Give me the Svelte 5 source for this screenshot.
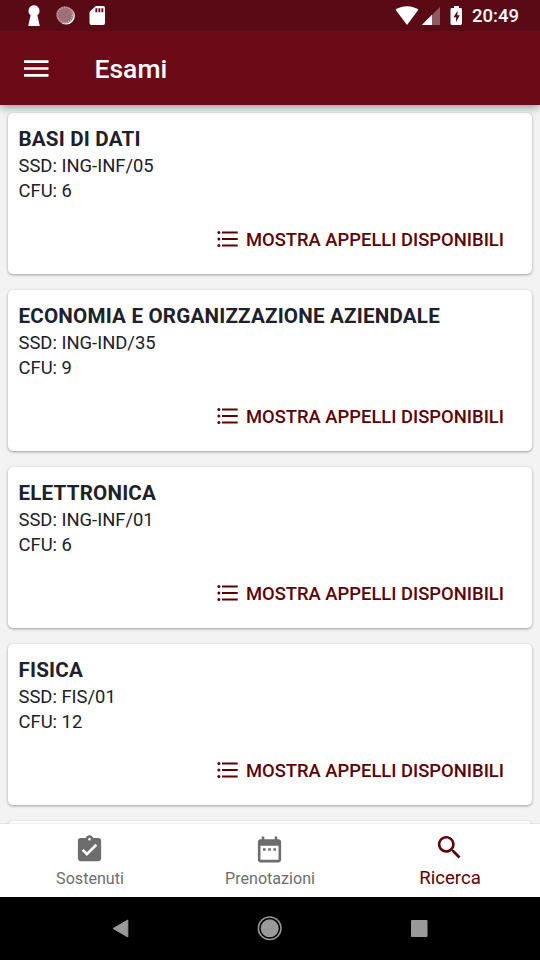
<script>
  const exams = [
    { name: 'BASI DI DATI', ssd: 'ING-INF/05', cfu: 6 },
    { name: 'ECONOMIA E ORGANIZZAZIONE AZIENDALE', ssd: 'ING-IND/35', cfu: 9 },
    { name: 'ELETTRONICA', ssd: 'ING-INF/01', cfu: 6 },
    { name: 'FISICA', ssd: 'FIS/01', cfu: 12 }
  ];
</script>

<div class="screen">
  <div class="status">
    <svg class="left" width="110" height="31" viewBox="0 0 110 31">
      <path fill="#fff" d="M34 5.2a5.7 5.7 0 0 0-3.400 10.100L28.200 26h11.600l-2.400-10.700A5.700 5.700 0 0 0 34 5.200z" />
      <circle cx="66.200" cy="15.900" r="8.600" fill="#fff" />
      <circle cx="65" cy="14.900" r="8.700" fill="#a06e78" />
      <circle cx="65" cy="14.900" r="7.600" fill="none" stroke="#c7a5ab" stroke-width="1.500" stroke-dasharray="1.200 1.250" />
      <path fill="#fff" fill-rule="evenodd" d="M95.700 6h7.300a2 2 0 0 1 2 2v15a2 2 0 0 1-2 2H91.500a2 2 0 0 1-2-2V12zM95.400 8.300v3.900h1.900V8.300zm3 0v3.900h1.900V8.300zm3 0v3.900h1.900V8.300z" />
    </svg>
    <svg width="90" height="31" viewBox="382 0 90 31">
      <path fill="#fff" d="M395.600 9.700q4.500-3.500 11.400-3.500t11.400 3.500L407 25z" />
      <path fill="#8e5964" d="M440 7v18h-18z" />
      <path fill="#fff" d="M432 14.800V25h-10.200z" />
      <path fill="#fff" fill-rule="evenodd" d="M454 6h5v2h1.600a1.400 1.400 0 0 1 1.400 1.400v14.200a1.400 1.400 0 0 1-1.400 1.400h-8.700a1.400 1.400 0 0 1-1.400-1.400V9.400A1.400 1.400 0 0 1 451.900 8h2.100zM457.700 10.500l-4.200 6.800h2.600v4.900l3.600-7h-2.400z" />
    </svg>
    <span class="time">20:49</span>
  </div>

  <header>
    <svg width="25" height="18" viewBox="0 0 25 18"><path fill="#fff" d="M0 .3h24.500v2.600H0zM0 7.200h24.500v2.600H0zM0 14.100h24.500v2.600H0z" /></svg>
    <h1>Esami</h1>
  </header>

  <main>
    {#each exams as exam}
      <section class="card">
        <h2>{exam.name}</h2>
        <p>SSD: {exam.ssd}</p>
        <p>CFU: {exam.cfu}</p>
        <button>
          <svg width="22" height="18" viewBox="0 0 22 18">
            <path fill="#5e0004" d="M5 1.400h15.700v2H5zM5 7.900h15.700v2H5zM5 14.400h15.700v2H5z" />
            <g fill="#5e0004"><circle cx="1.900" cy="2.400" r="1.500" /><circle cx="1.900" cy="8.900" r="1.500" /><circle cx="1.900" cy="15.400" r="1.500" /></g>
          </svg>
          <span>MOSTRA APPELLI DISPONIBILI</span>
        </button>
      </section>
    {/each}
    <section class="card"></section>
  </main>

  <nav class="tabs">
    <div class="tab">
      <svg width="31" height="31" viewBox="0 0 24 24"><path fill="#6d6d6d" d="M19 3h-4.180C14.400 1.840 13.300 1 12 1s-2.400.84-2.820 2H5c-1.100 0-2 .9-2 2v14c0 1.100.9 2 2 2h14c1.100 0 2-.9 2-2V5c0-1.100-.9-2-2-2zm-7 0c.55 0 1 .45 1 1s-.45 1-1 1-1-.45-1-1 .45-1 1-1zm-2 14l-4-4 1.410-1.410L10 14.170l6.590-6.590L18 9l-8 8z" /></svg>
      <span>Sostenuti</span>
    </div>
    <div class="tab">
      <svg width="31" height="31" viewBox="0 0 24 24"><path fill="#6d6d6d" d="M9 11H7v2h2v-2zm4 0h-2v2h2v-2zm4 0h-2v2h2v-2zm2-7h-1V2h-2v2H8V2H6v2H5c-1.110 0-1.990.9-1.990 2L3 20c0 1.100.89 2 2 2h14c1.100 0 2-.9 2-2V6c0-1.100-.9-2-2-2zm0 16H5V9h14v11z" /></svg>
      <span>Prenotazioni</span>
    </div>
    <div class="tab active">
      <svg width="31" height="31" viewBox="0 0 24 24"><path fill="#5e0004" d="M15.500 14h-.79l-.28-.27C15.410 12.590 16 11.110 16 9.500 16 5.910 13.090 3 9.500 3S3 5.910 3 9.500 5.910 16 9.500 16c1.610 0 3.090-.59 4.230-1.570l.27.28v.79l5 4.990L20.490 19l-4.990-5zm-6 0C7.010 14 5 11.990 5 9.500S7.010 5 9.500 5 14 7.010 14 9.500 11.990 14 9.500 14z" /></svg>
      <span>Ricerca</span>
    </div>
  </nav>

  <div class="system">
    <svg width="540" height="63" viewBox="0 0 540 63">
      <path fill="#999" stroke="#999" stroke-linejoin="round" d="M113.200 31.500 127.800 23v17z" />
      <circle cx="269.700" cy="31.300" r="11.300" fill="none" stroke="#999" stroke-width="1.500" />
      <circle cx="269.700" cy="31.300" r="9" fill="#999" />
      <rect x="411" y="23" width="16.500" height="17" rx="1" fill="#999" />
    </svg>
  </div>
</div>

<style>
  :global(body) { margin: 0; }
  .screen { width: 540px; height: 960px; display: flex; flex-direction: column; overflow: hidden; background: #f3f3f3; font-family: Roboto, sans-serif; }
  .status { height: 31px; flex: none; background: #5a0a15; display: flex; align-items: center; z-index: 3; }
  .left { margin-right: auto; }
  .time { width: 68px; font-size: 18.500px; font-weight: 500; color: #fff; line-height: 31px; padding-top: 2px; box-sizing: border-box; }
  header { position: relative; z-index: 2; height: 74px; flex: none; background: #6d0a17; box-shadow: 0 2px 9px rgba(0, 0, 0, .42); display: flex; align-items: center; padding: 1px 0 0 24px; box-sizing: border-box; gap: 45.500px; }
  h1 { margin: 1px 0 0; font-size: 26.500px; line-height: 32px; font-weight: 500; color: #fff; }
  main { height: 719px; flex: none; overflow: hidden; box-sizing: border-box; padding: 8px 8px 0; display: flex; flex-direction: column; gap: 16px; }
  .card { height: 161px; flex: none; box-sizing: border-box; background: #fff; border-radius: 5px; box-shadow: 0 1px 3px rgba(0, 0, 0, .36); padding: 13px 10.500px 0; color: #20202a; display: flex; flex-direction: column; }
  h2 { margin: 0; font-size: 20.600px; letter-spacing: .19px; line-height: 27px; font-weight: 700; white-space: nowrap; }
  p { margin: 0; font-size: 18.400px; line-height: 25.300px; white-space: nowrap; }
  button { margin: 21.400px 17.500px 0 auto; border: 0; padding: 0; background: none; display: flex; align-items: center; gap: 6.500px; height: 30px; font: 500 18.400px/30px Roboto, sans-serif; color: #5e0004; white-space: nowrap; }
  button svg { margin-top: -1px; }
  .tabs { height: 73px; flex: none; z-index: 2; background: #fff; display: flex; box-shadow: 0 -1px 1px rgba(0, 0, 0, .05); }
  .tab { flex: 1; display: flex; flex-direction: column; align-items: center; padding-top: 10px; color: #6d6d6d; font-size: 16.100px; line-height: 22px; }
  .tab svg { margin-right: 1px; }
  .tab span { margin-top: 3px; }
  .tab.active { padding-top: 8px; color: #5e0004; font-size: 18.600px; }
  .tab.active span { margin-top: 4px; }
  .system { height: 63px; flex: none; background: #000; z-index: 2; }
  .system svg { display: block; }
</style>
